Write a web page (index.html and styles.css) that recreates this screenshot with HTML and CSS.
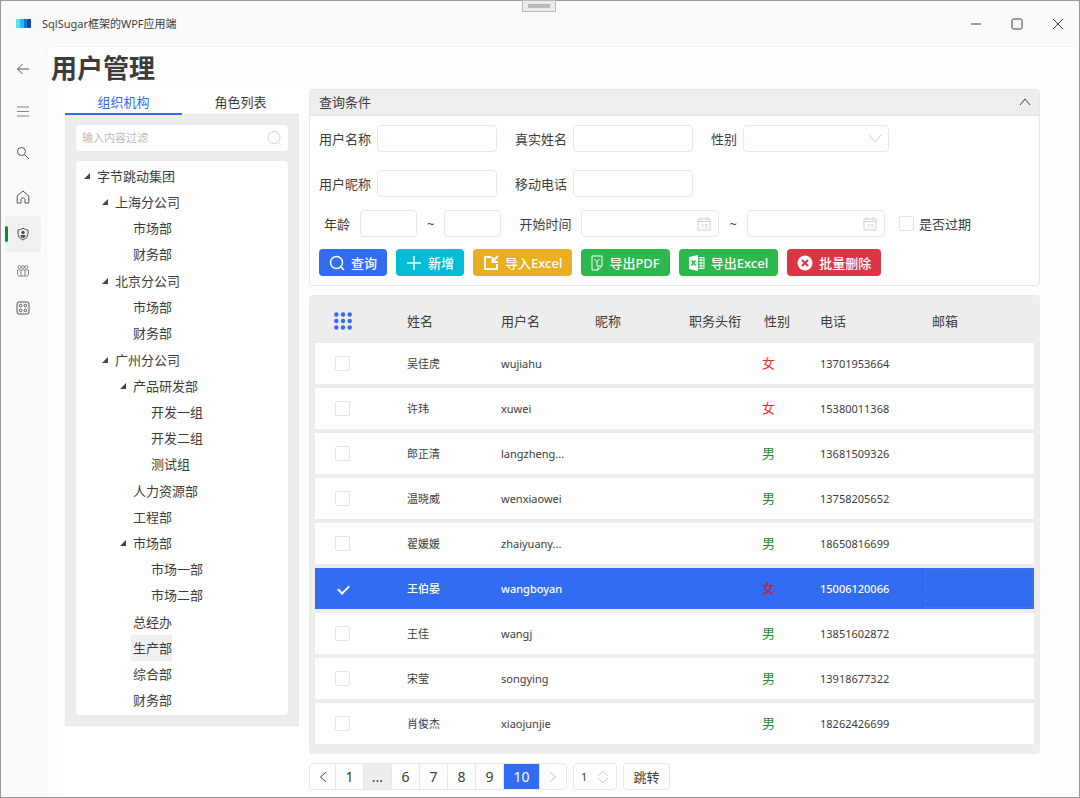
FILE: index.html
```html
<!DOCTYPE html>
<html lang="zh-CN">
<head>
    <meta charset="UTF-8">
    <meta name="viewport" content="width=device-width, initial-scale=1.0">
    <title>SqlSugar框架的WPF应用端</title>
    <link rel="stylesheet" href="styles.css">
</head>
<body>
<div class="window">
    <header class="titlebar">
        <svg class="logo" width="15" height="9" viewBox="0 0 15 9">
            <rect width="5" height="9" rx="1" fill="#50e6ff"/>
            <rect x="4" width="4" height="9" fill="#32b4f5"/>
            <rect x="8" width="3" height="9" fill="#0f78d4"/>
            <rect x="11" width="4" height="9" rx="1" fill="#0a4a94"/>
        </svg>
        <span class="app-name">SqlSugar框架的WPF应用端</span>
        <div class="window-buttons">
            <button aria-label="最小化"><svg width="12" height="12" viewBox="0 0 12 12"><path d="M1 6h10"/></svg></button>
            <button aria-label="最大化"><svg width="12" height="12" viewBox="0 0 12 12"><rect x="1" y="1" width="10" height="10" rx="1.5"/></svg></button>
            <button aria-label="关闭"><svg width="12" height="12" viewBox="0 0 12 12"><path d="M1 1l10 10M11 1L1 11"/></svg></button>
        </div>
        <div class="grip"></div>
    </header>

    <div class="shell">
        <nav class="sidebar">
            <button class="top" aria-label="返回"><svg width="14" height="14" viewBox="0 0 14 14"><path d="M13 7H1.500M6.500 2L1.500 7l5 5"/></svg></button>
            <button class="top thin" aria-label="菜单"><svg width="14" height="14" viewBox="0 0 14 14"><path d="M1 3h12M1 7.500h12M1 12h12"/></svg></button>
            <button class="top" aria-label="搜索"><svg width="14" height="14" viewBox="0 0 14 14"><circle cx="5.500" cy="5.500" r="4"/><path d="M8.500 8.500L13 13"/></svg></button>
            <button aria-label="首页"><svg width="14" height="14" viewBox="0 0 14 14"><path d="M1.200 6L7 1l5.800 5v7H9V9.500Q9 8 7 8T5 9.500V13H1.200z"/></svg></button>
            <button class="active" aria-label="用户管理"><svg width="14" height="14" viewBox="0 0 14 14"><path d="M7 1.200Q9.500 3 12 3v4q0 4-5 6-5-2-5-6V3q2.500 0 5-1.800z"/><circle cx="7" cy="5.500" r="1.300" fill="#444"/><path d="M4.800 8.500h4.400q0 2-2.200 2t-2.200-2z" fill="#444"/></svg></button>
            <button class="thin" aria-label="组织"><svg width="14" height="14" viewBox="0 0 14 14"><circle cx="3.500" cy="3" r="1.500"/><circle cx="7" cy="3" r="1.500"/><circle cx="10.500" cy="3" r="1.500"/><path d="M1.500 6h11v4.500q0 1.500-2 1.500h-7q-2 0-2-1.500zM5 6v6M9 6v6"/></svg></button>
            <button aria-label="数据"><svg width="14" height="14" viewBox="0 0 14 14"><rect x="1" y="1" width="12" height="12" rx="2"/><rect x="3.300" y="3.300" width="2.600" height="2.600" rx="1"/><rect x="8.100" y="3.300" width="2.600" height="2.600" rx="1"/><rect x="3.300" y="8.100" width="2.600" height="2.600" rx="1"/><rect x="8.100" y="8.100" width="2.600" height="2.600" rx="1"/></svg></button>
        </nav>

        <main class="page">
            <h1>用户管理</h1>
            <div class="workspace">
                <aside class="org">
                    <div class="tabs" role="tablist">
                        <button class="tab selected" role="tab" aria-selected="true">组织机构</button>
                        <button class="tab" role="tab" aria-selected="false">角色列表</button>
                    </div>
                    <div class="org-panel">
                        <div class="with-icon">
                            <input class="filter" type="text" placeholder="输入内容过滤" aria-label="输入内容过滤">
                            <svg width="16" height="16" viewBox="0 0 16 16"><circle cx="8" cy="7.500" r="6"/><path d="M12.500 12.500l2 2"/></svg>
                        </div>
                        <ul class="tree">
                            <li><span class="branch">字节跳动集团</span>
                                <ul>
                                    <li><span class="branch">上海分公司</span>
                                        <ul>
                                            <li><span>市场部</span></li>
                                            <li><span>财务部</span></li>
                                        </ul>
                                    </li>
                                    <li><span class="branch">北京分公司</span>
                                        <ul>
                                            <li><span>市场部</span></li>
                                            <li><span>财务部</span></li>
                                        </ul>
                                    </li>
                                    <li><span class="branch">广州分公司</span>
                                        <ul>
                                            <li><span class="branch">产品研发部</span>
                                                <ul>
                                                    <li><span>开发一组</span></li>
                                                    <li><span>开发二组</span></li>
                                                    <li><span>测试组</span></li>
                                                </ul>
                                            </li>
                                            <li><span>人力资源部</span></li>
                                            <li><span>工程部</span></li>
                                            <li><span class="branch">市场部</span>
                                                <ul>
                                                    <li><span>市场一部</span></li>
                                                    <li><span>市场二部</span></li>
                                                </ul>
                                            </li>
                                            <li><span>总经办</span></li>
                                            <li><span class="current">生产部</span></li>
                                            <li><span>综合部</span></li>
                                            <li><span>财务部</span></li>
                                        </ul>
                                    </li>
                                </ul>
                            </li>
                        </ul>
                    </div>
                </aside>

                <div class="users">
                    <section class="query">
                        <button class="query-head" aria-expanded="true">
                            查询条件
                            <svg width="12" height="12" viewBox="0 0 12 12"><path d="M1 9l5-6 5 6"/></svg>
                        </button>
                        <form class="query-body">
                            <div class="form-row">
                                <label for="userName">用户名称</label>
                                <input type="text" id="userName">
                                <label for="realName">真实姓名</label>
                                <input type="text" id="realName">
                                <label for="gender">性别</label>
                                <div class="with-icon">
                                    <select id="gender"><option value=""></option><option>男</option><option>女</option></select>
                                    <svg width="16" height="12" viewBox="0 0 16 12"><path d="M2 2l6 7 6-7"/></svg>
                                </div>
                            </div>
                            <div class="form-row second">
                                <label for="nickName">用户昵称</label>
                                <input type="text" id="nickName">
                                <label for="mobile">移动电话</label>
                                <input type="text" id="mobile">
                            </div>
                            <div class="form-row ranges">
                                <label for="ageFrom">年龄</label>
                                <input type="text" id="ageFrom" class="age">
                                <span>~</span>
                                <input type="text" class="age" aria-label="最大年龄">
                                <label for="startTime" class="start">开始时间</label>
                                <div class="with-icon">
                                    <input type="text" id="startTime" class="date">
                                    <svg width="14" height="14" viewBox="0 0 14 14"><path d="M1 2h12v11H1zM1 4.500h12M4 0v3M10 0v3"/><text x="4" y="11">15</text></svg>
                                </div>
                                <span>~</span>
                                <div class="with-icon">
                                    <input type="text" class="date" aria-label="结束时间">
                                    <svg width="14" height="14" viewBox="0 0 14 14"><path d="M1 2h12v11H1zM1 4.500h12M4 0v3M10 0v3"/><text x="4" y="11">15</text></svg>
                                </div>
                                <label class="expired"><input type="checkbox">是否过期</label>
                            </div>
                            <div class="actions">
                                <button type="button" class="primary"><svg width="16" height="16" viewBox="0 0 16 16"><circle cx="7.500" cy="7.500" r="6"/><path d="M12 12l3 3"/></svg>查询</button>
                                <button type="button" class="info"><svg width="16" height="16" viewBox="0 0 16 16"><path d="M8 1v14M1 8h14"/></svg>新增</button>
                                <button type="button" class="warning"><svg width="16" height="16" viewBox="0 0 16 16"><path d="M8 2H2v12h12V9" stroke-width="2"/><path d="M15 1L9.500 6.500M9.500 2v5H15" stroke-width="2"/></svg>导入Excel</button>
                                <button type="button" class="success"><svg width="12" height="16" viewBox="0 0 12 16"><path d="M1 1h10v10l-4 4H1zM11 11H7v4M3.500 4L6 7v4M8.500 4L6 7" stroke-width="1"/></svg>导出PDF</button>
                                <button type="button" class="success"><svg width="16" height="16" viewBox="0 0 16 16"><path d="M0 2l9-2v16l-9-2z" fill="#fff" stroke="none"/><path d="M2.500 5.500l4 5M6.500 5.500l-4 5" stroke="#2db84d"/><path d="M9.500 2.500H15v11H9.500M9.500 5H15M9.500 8H15M9.500 11H15M12 2.500v11" stroke-width="1"/></svg>导出Excel</button>
                                <button type="button" class="danger"><svg width="16" height="16" viewBox="0 0 16 16"><circle cx="8" cy="8" r="7.500" fill="#fff" stroke="none"/><path d="M5 5l6 6M11 5l-6 6" stroke="#dc3545" stroke-width="2"/></svg>批量删除</button>
                            </div>
                        </form>
                    </section>

                    <section class="grid-panel">
                        <table>
                            <colgroup>
                                <col class="c-check"><col class="c-name"><col class="c-name"><col class="c-name"><col class="c-title"><col class="c-gender"><col class="c-phone"><col>
                            </colgroup>
                            <thead>
                                <tr>
                                    <th class="check"><svg width="18" height="18" viewBox="0 0 18 18"><circle cx="2.300" cy="2.500" r="2.200"/><circle cx="9" cy="2.500" r="2.200"/><circle cx="15.700" cy="2.500" r="2.200"/><circle cx="2.300" cy="9" r="2.200"/><circle cx="9" cy="9" r="2.200"/><circle cx="15.700" cy="9" r="2.200"/><circle cx="2.300" cy="15.500" r="2.200"/><circle cx="9" cy="15.500" r="2.200"/><circle cx="15.700" cy="15.500" r="2.200"/></svg></th>
                                    <th>姓名</th><th>用户名</th><th>昵称</th><th>职务头衔</th><th>性别</th><th>电话</th><th>邮箱</th>
                                </tr>
                            </thead>
                            <tbody>
                                <tr><td class="check"><input type="checkbox" aria-label="选择吴佳虎"></td><td>吴佳虎</td><td>wujiahu</td><td></td><td></td><td class="gender female">女</td><td>13701953664</td><td></td></tr>
                                <tr><td class="check"><input type="checkbox" aria-label="选择许玮"></td><td>许玮</td><td>xuwei</td><td></td><td></td><td class="gender female">女</td><td>15380011368</td><td></td></tr>
                                <tr><td class="check"><input type="checkbox" aria-label="选择郎正清"></td><td>郎正清</td><td>langzheng...</td><td></td><td></td><td class="gender male">男</td><td>13681509326</td><td></td></tr>
                                <tr><td class="check"><input type="checkbox" aria-label="选择温晓威"></td><td>温晓威</td><td>wenxiaowei</td><td></td><td></td><td class="gender male">男</td><td>13758205652</td><td></td></tr>
                                <tr><td class="check"><input type="checkbox" aria-label="选择翟媛媛"></td><td>翟媛媛</td><td>zhaiyuany...</td><td></td><td></td><td class="gender male">男</td><td>18650816699</td><td></td></tr>
                                <tr class="selected"><td class="check"><input type="checkbox" aria-label="选择王伯晏" checked></td><td>王伯晏</td><td>wangboyan</td><td></td><td></td><td class="gender female">女</td><td>15006120066</td><td class="focused"></td></tr>
                                <tr><td class="check"><input type="checkbox" aria-label="选择王佳"></td><td>王佳</td><td>wangj</td><td></td><td></td><td class="gender male">男</td><td>13851602872</td><td></td></tr>
                                <tr><td class="check"><input type="checkbox" aria-label="选择宋莹"></td><td>宋莹</td><td>songying</td><td></td><td></td><td class="gender male">男</td><td>13918677322</td><td></td></tr>
                                <tr><td class="check"><input type="checkbox" aria-label="选择肖俊杰"></td><td>肖俊杰</td><td>xiaojunjie</td><td></td><td></td><td class="gender male">男</td><td>18262426699</td><td></td></tr>
                            </tbody>
                        </table>
                    </section>

                    <div class="pager">
                        <div class="pages">
                            <button class="prev" aria-label="上一页"><svg width="8" height="12" viewBox="0 0 8 12"><path d="M7 1L1.500 6 7 11"/></svg></button>
                            <button>1</button>
                            <button class="more">...</button>
                            <button>6</button>
                            <button>7</button>
                            <button>8</button>
                            <button>9</button>
                            <button class="current">10</button>
                            <button class="next" aria-label="下一页" disabled><svg width="8" height="12" viewBox="0 0 8 12"><path d="M1 1l5.500 5L1 11"/></svg></button>
                        </div>
                        <div class="with-icon">
                            <input class="jump" type="text" value="1" aria-label="页码">
                            <svg width="12" height="14" viewBox="0 0 12 14"><path d="M1 6l5-5 5 5M1 8l5 5 5-5"/></svg>
                        </div>
                        <button class="go">跳转</button>
                    </div>
                </div>
            </div>
        </main>
    </div>
</div>
</body>
</html>
```
FILE: styles.css
```css
* {
    box-sizing: border-box;
}
body {
    margin: 0;
    font-family: "Noto Sans", "Noto Sans CJK SC", sans-serif;
    font-size: 13px;
    line-height: 26px;
    color: #3c3c3c;
}
button, input, select {
    font: inherit;
    color: inherit;
    margin: 0;
    padding: 0;
    border: none;
    background: none;
}
svg {
    display: block;
    flex: none;
    fill: none;
    stroke: currentColor;
}
.window {
    display: flex;
    flex-direction: column;
    min-height: 100vh;
    border: 1px solid #999;
    background: #fafafa;
}

/* title bar */
.titlebar {
    position: relative;
    display: flex;
    align-items: center;
    height: 45px;
    padding: 0 1px 0 15px;
}
.logo {
    stroke: none;
}
.app-name {
    margin-left: 11px;
    font-size: 11px;
}
.window-buttons {
    display: flex;
    margin-left: auto;
}
.window-buttons button {
    display: flex;
    align-items: center;
    justify-content: center;
    width: 41px;
    height: 32px;
}
.grip {
    position: absolute;
    top: -1px;
    left: 50%;
    width: 34px;
    height: 12px;
    margin-left: -18px;
    padding: 3px 5px;
    border: 1px solid #b9b9bb;
    background: #e9e9ee;
}
.grip::before {
    content: '';
    display: block;
    height: 4px;
    background: #bbb;
}

/* navigation rail */
.shell {
    display: flex;
    flex: 1;
}
.sidebar {
    display: flex;
    flex-direction: column;
    width: 45px;
    padding: 2px 0 0 4px;
}
.sidebar button {
    position: relative;
    display: flex;
    align-items: center;
    justify-content: center;
    width: 36px;
    height: 36px;
    margin-bottom: 1px;
    border-radius: 4px;
    color: #555;
}
.sidebar button.top {
    height: 42px;
    margin-bottom: 0;
}
.sidebar button.top:nth-child(3) {
    margin-bottom: 5px;
}
.sidebar .thin {
    color: #888;
}
.sidebar button.active {
    background: #f0f0f0;
}
.sidebar button.active::before {
    content: '';
    position: absolute;
    left: 0;
    top: 10px;
    width: 3px;
    height: 16px;
    border-radius: 2px;
    background: #10893e;
}

.page {
    display: flex;
    flex-direction: column;
    flex: 1;
    min-width: 0;
    padding-right: 39px;
    border: 1px solid #f2f2f2;
    border-width: 1px 0 0 1px;
    border-radius: 8px 0 0 0;
    background: #fdfdfd;
}
h1 {
    margin: 0;
    padding-left: 4px;
    font-size: 26px;
    line-height: 42px;
}
.workspace {
    display: grid;
    grid-template-columns: 234px 1fr;
    gap: 10px;
    align-items: start;
    flex: 1;
    margin-left: 18px;
    background: #fff;
}

/* organisation tree */
.tabs {
    display: flex;
}
.tab {
    flex: 1;
    height: 26px;
    border-bottom: 1px solid #e8e8e8;
}
.tab.selected {
    color: #326cf3;
    border-bottom: 2px solid #326cf3;
}
.org-panel {
    display: flex;
    flex-direction: column;
    gap: 10px;
    padding: 10px 11px;
    border: 1px solid #e6e6e6;
    border-width: 0 0 1px;
    background: #ededed;
}
.with-icon {
    position: relative;
}
.with-icon svg {
    position: absolute;
    top: 50%;
    right: 6px;
    transform: translateY(-50%);
    color: #d0d0d0;
    pointer-events: none;
}
.filter {
    display: block;
    width: 100%;
    height: 26px;
    padding: 0 6px;
    border-radius: 4px;
    background: #fff;
    font-size: 11px;
}
.filter::placeholder {
    color: #bbb;
}
.tree {
    margin: 0;
    padding: 2px 0 0 19px;
    border-radius: 4px;
    background: #fff;
}
.tree ul {
    margin: 0;
    padding: 0 0 1px 18px;
}
.tree li {
    list-style: none;
}
.tree span {
    position: relative;
    display: inline-block;
    vertical-align: top;
    height: 26px;
    padding-left: 2px;
}
.branch::before {
    content: '';
    position: absolute;
    left: -11px;
    top: 10px;
    border: solid transparent;
    border-width: 0 0 6px 6px;
    border-bottom-color: #444;
}
.tree .current {
    background: #f0f0f0;
}

/* query form */
.query {
    border: 1px solid #e8e8e8;
    border-radius: 4px;
    overflow: hidden;
}
.query-head {
    display: flex;
    align-items: center;
    justify-content: space-between;
    width: 100%;
    padding: 0 8px 2px 9px;
    height: 26px;
    border-bottom: 1px solid #e4e4e4;
    background: #eee;
}
.query-body {
    padding: 9px;
}
.form-row {
    display: flex;
    align-items: center;
    gap: 6px;
}
.form-row.second {
    margin: 18px 0 13px;
}
.form-row input[type="text"], .form-row select {
    display: block;
    width: 120px;
    height: 27px;
    padding: 0 6px;
    border: 1px solid #e8e8e8;
    border-radius: 4px;
    background: #fff;
}
.form-row input + label {
    margin-left: 12px;
}
.form-row select {
    width: 146px;
    appearance: none;
}
.form-row.ranges {
    gap: 10px;
    padding-left: 5px;
}
.form-row input.age {
    width: 57px;
}
.form-row input + label.start {
    margin-left: 8px;
}
.form-row input.date {
    width: 138px;
}
.ranges .with-icon svg {
    right: 8px;
}
.ranges text {
    font-size: 6px;
    fill: #ccc;
    stroke: none;
}
.expired {
    display: flex;
    align-items: center;
    gap: 5px;
    margin-left: 4px;
}
input[type="checkbox"] {
    display: block;
    width: 15px;
    height: 15px;
    border: 1px solid #e4e4e4;
    border-radius: 2px;
    background: #fff;
    appearance: none;
}
.actions {
    display: flex;
    gap: 9px;
    margin-top: 12px;
}
.actions button {
    display: flex;
    align-items: center;
    gap: 6px;
    height: 27px;
    padding: 0 10px;
    border-radius: 4px;
    color: #fff;
    font-weight: 500;
}
.actions svg {
    stroke-width: 1.500;
}
.primary {
    background: #326cf3;
}
.info {
    background: #00bcd4;
}
.warning {
    background: #e9af20;
}
.success {
    background: #2db84d;
}
.danger {
    background: #dc3545;
}

/* user table */
.grid-panel {
    margin-top: 9px;
    padding: 4px 6px 6px;
    border-radius: 4px;
    background: #ededed;
}
table {
    width: 100%;
    table-layout: fixed;
    border-collapse: separate;
    border-spacing: 0 4px;
}
.c-check {
    width: 84px;
}
.c-name {
    width: 94px;
}
.c-title {
    width: 75px;
}
.c-gender {
    width: 56px;
}
.c-phone {
    width: 112px;
}
th {
    height: 36px;
    padding: 0 0 0 8px;
    font-weight: 400;
    text-align: left;
    white-space: nowrap;
}
th svg {
    stroke: none;
    fill: #326cf3;
}
td {
    height: 41px;
    padding: 0 0 0 8px;
    background: #fff;
    font-size: 11px;
}
td.check {
    padding-left: 20px;
}
th.check {
    padding-left: 19px;
}
td.gender {
    padding: 0 0 2px 6px;
    font-size: 13px;
}
.female {
    color: #f22;
}
.male {
    color: #1e8e2e;
}
tr.selected td {
    background: #326cf3;
    color: #fff;
    font-weight: 500;
}
tr.selected td.female {
    color: #c8203c;
}
tr.selected td.focused {
    outline: 1px dashed #5578c8;
    outline-offset: -2px;
}
td input:checked {
    border: none;
    background: none;
}
td input:checked::before {
    content: '';
    display: block;
    width: 9px;
    height: 5px;
    margin: 4px 3px;
    border: solid #fff;
    border-width: 0 0 2px 2px;
    transform: rotate(-45deg);
}

/* pager */
.pager {
    display: flex;
    gap: 6px;
    margin-top: 9px;
}
.pages {
    display: flex;
    border: 1px solid #e8e8e8;
    border-radius: 4px;
    overflow: hidden;
}
.pages button {
    display: flex;
    align-items: center;
    justify-content: center;
    width: 28px;
    height: 25px;
    border-right: 1px solid #e8e8e8;
    font-size: 14px;
}
.pages .more {
    background: #ededed;
}
.pages .prev, .pages .next {
    width: 26px;
}
.pages .current {
    width: 36px;
    background: #326cf3;
    color: #fff;
}
.pages .next {
    border-right: none;
    color: #bbb;
}
.jump {
    display: block;
    width: 44px;
    height: 27px;
    padding: 0 7px;
    border: 1px solid #e8e8e8;
    border-radius: 4px;
    font-size: 11px;
}
.pager .with-icon svg {
    right: 8px;
}
.go {
    width: 47px;
    height: 27px;
    border: 1px solid #e8e8e8;
    border-radius: 4px;
}
```
